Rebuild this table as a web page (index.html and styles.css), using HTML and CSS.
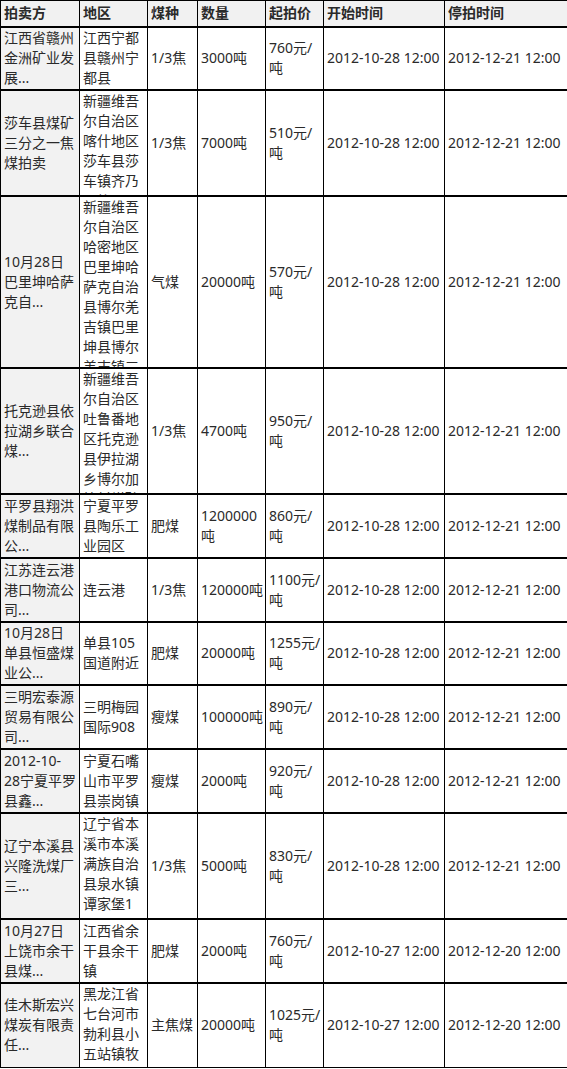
FILE: index.html
```html
<!DOCTYPE html>
<html lang="zh-CN">
<head>
<meta charset="utf-8">
<title>煤炭拍卖</title>
<link rel="stylesheet" href="styles.css">
</head>
<body>
<table class="sheet">
  <colgroup>
    <col class="c-seller"><col class="c-area"><col class="c-kind"><col class="c-qty"><col class="c-price"><col class="c-start"><col class="c-end">
  </colgroup>
  <thead>
    <tr class="head">
      <th>拍卖方</th><th>地区</th><th>煤种</th><th>数量</th><th>起拍价</th><th>开始时间</th><th>停拍时间</th>
    </tr>
  </thead>
  <tbody>
    <tr class="h63">
      <td class="seller">江西省赣州<br>金洲矿业发<br>展...</td>
      <td>江西宁都<br>县赣州宁<br>都县</td>
      <td>1/3焦</td><td>3000吨</td><td>760元/<br>吨</td>
      <td>2012-10-28 12:00</td><td>2012-12-21 12:00</td>
    </tr>
    <tr class="h106">
      <td class="seller">莎车县煤矿<br>三分之一焦<br>煤拍卖</td>
      <td class="top"><div class="clip">新疆维吾<br>尔自治区<br>喀什地区<br>莎车县莎<br>车镇齐乃<br>巴格乡</div></td>
      <td>1/3焦</td><td>7000吨</td><td>510元/<br>吨</td>
      <td>2012-10-28 12:00</td><td>2012-12-21 12:00</td>
    </tr>
    <tr class="h172">
      <td class="seller">10月28日<br>巴里坤哈萨<br>克自...</td>
      <td class="top"><div class="clip">新疆维吾<br>尔自治区<br>哈密地区<br>巴里坤哈<br>萨克自治<br>县博尔羌<br>吉镇巴里<br>坤县博尔<br>羌吉镇三</div></td>
      <td>气煤</td><td>20000吨</td><td>570元/<br>吨</td>
      <td>2012-10-28 12:00</td><td>2012-12-21 12:00</td>
    </tr>
    <tr class="h126">
      <td class="seller">托克逊县依<br>拉湖乡联合<br>煤...</td>
      <td class="top"><div class="clip">新疆维吾<br>尔自治区<br>吐鲁番地<br>区托克逊<br>县伊拉湖<br>乡博尔加<br>拉村煤矿</div></td>
      <td>1/3焦</td><td>4700吨</td><td>950元/<br>吨</td>
      <td>2012-10-28 12:00</td><td>2012-12-21 12:00</td>
    </tr>
    <tr class="h64">
      <td class="seller">平罗县翔洪<br>煤制品有限<br>公...</td>
      <td>宁夏平罗<br>县陶乐工<br>业园区</td>
      <td>肥煤</td><td>1200000<br>吨</td><td>860元/<br>吨</td>
      <td>2012-10-28 12:00</td><td>2012-12-21 12:00</td>
    </tr>
    <tr class="h64">
      <td class="seller">江苏连云港<br>港口物流公<br>司...</td>
      <td>连云港</td>
      <td>1/3焦</td><td>120000吨</td><td>1100元/<br>吨</td>
      <td>2012-10-28 12:00</td><td>2012-12-21 12:00</td>
    </tr>
    <tr class="h63">
      <td class="seller">10月28日<br>单县恒盛煤<br>业公...</td>
      <td>单县105<br>国道附近</td>
      <td>肥煤</td><td>20000吨</td><td>1255元/<br>吨</td>
      <td>2012-10-28 12:00</td><td>2012-12-21 12:00</td>
    </tr>
    <tr class="h64">
      <td class="seller">三明宏泰源<br>贸易有限公<br>司...</td>
      <td>三明梅园<br>国际908</td>
      <td>瘦煤</td><td>100000吨</td><td>890元/<br>吨</td>
      <td>2012-10-28 12:00</td><td>2012-12-21 12:00</td>
    </tr>
    <tr class="h64">
      <td class="seller">2012-10-<br>28宁夏平罗<br>县鑫...</td>
      <td>宁夏石嘴<br>山市平罗<br>县崇岗镇</td>
      <td>瘦煤</td><td>2000吨</td><td>920元/<br>吨</td>
      <td>2012-10-28 12:00</td><td>2012-12-21 12:00</td>
    </tr>
    <tr class="h106">
      <td class="seller">辽宁本溪县<br>兴隆洗煤厂<br>三...</td>
      <td class="top"><div class="clip">辽宁省本<br>溪市本溪<br>满族自治<br>县泉水镇<br>谭家堡1<br>号</div></td>
      <td>1/3焦</td><td>5000吨</td><td>830元/<br>吨</td>
      <td>2012-10-28 12:00</td><td>2012-12-21 12:00</td>
    </tr>
    <tr class="h64">
      <td class="seller">10月27日<br>上饶市余干<br>县煤...</td>
      <td>江西省余<br>干县余干<br>镇</td>
      <td>肥煤</td><td>2000吨</td><td>760元/<br>吨</td>
      <td>2012-10-27 12:00</td><td>2012-12-20 12:00</td>
    </tr>
    <tr class="h85">
      <td class="seller">佳木斯宏兴<br>煤炭有限责<br>任...</td>
      <td class="top"><div class="clip">黑龙江省<br>七台河市<br>勃利县小<br>五站镇牧<br>场</div></td>
      <td>主焦煤</td><td>20000吨</td><td>1025元/<br>吨</td>
      <td>2012-10-27 12:00</td><td>2012-12-20 12:00</td>
    </tr>
  </tbody>
</table>
</body>
</html>
```

FILE: styles.css
```css
html, body {
  margin: 0;
  padding: 0;
  background: #fff;
}

body {
  font-family: "Noto Sans", "Noto Sans CJK SC", sans-serif;
  font-size: 14px;
  line-height: 20px;
  color: #2a2a2a;
}

.sheet {
  border-collapse: collapse;
  table-layout: fixed;
  width: 567px;
}

.c-seller { width: 79px; }
.c-area { width: 68px; }
.c-kind { width: 50px; }
.c-qty { width: 68px; }
.c-price { width: 58px; }
.c-start { width: 121px; }
.c-end { width: 123px; }

.sheet th,
.sheet td {
  border: 1px solid #000;
  border-top-width: 2px;
  padding: 0 3px;
  vertical-align: middle;
  text-align: left;
  white-space: nowrap;
  overflow: hidden;
}

.sheet th {
  background: #f1f1f1;
  font-weight: bold;
  border-top-width: 1px;
}

.sheet td.seller {
  background: #f2f2f2;
}

.sheet td.top {
  vertical-align: top;
}

.clip {
  overflow: hidden;
}

.head { height: 26px; }
.h63 { height: 63px; }
.h64 { height: 64px; }
.h85 { height: 85px; }
.h106 { height: 106px; }
.h126 { height: 126px; }
.h172 { height: 172px; }

.h85 .clip { height: 83px; }
.h106 .clip { height: 104px; }
.h126 .clip { height: 124px; }
.h172 .clip { height: 170px; }
```
